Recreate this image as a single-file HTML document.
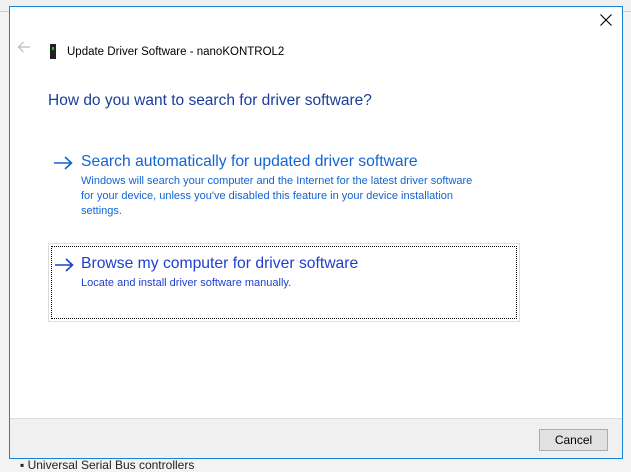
<!DOCTYPE html>
<html><head><meta charset="utf-8"><style>
*{margin:0;padding:0;box-sizing:border-box}
body{width:631px;height:465px;overflow:hidden;background:#f3f3f3;font-family:"Segoe UI","Liberation Sans",sans-serif;position:relative}
.topbar{position:absolute;left:0;top:0;width:631px;height:12px;background:#f0f0f0;border-bottom:1px solid #ccc}
.btm{position:absolute;left:20px;top:458px;font-size:12px;color:#222}
.dlg{position:absolute;left:9px;top:6px;width:614px;height:453px;background:#fff;border:1px solid #1883d7}
.title{position:absolute;left:67px;top:46px;font-size:11.5px;color:#000;white-space:nowrap}
.back{position:absolute;left:17px;top:41px}
.dev{position:absolute;left:50px;top:44px;width:6px;height:15px;background:#222}
.dev:after{content:"";position:absolute;left:2px;top:3px;width:2px;height:3px;background:#1c1}
.x{position:absolute;left:600px;top:14px}
h1{position:absolute;left:48px;top:92px;font-size:15.5px;font-weight:normal;color:#1a3d99;white-space:nowrap}
.opt{position:absolute;width:472px}
.opt .t{position:absolute;font-size:15.7px;white-space:nowrap}
.opt .a{position:absolute}
.opt .d{position:absolute;font-size:11px;line-height:15px;width:400px}
.o1{left:48px;top:152px;color:#1264d4}
.o2{top:243px;height:79px;border:1px solid #ddd;left:48px}
.o2 .in{position:absolute;left:2px;top:2px;right:2px;bottom:2px;border:1px dotted #000}
.o2,.o2 *{color:#1e3ed0}
.foot{position:absolute;left:10px;top:418px;width:612px;height:40px;background:#f0f0f0;border-top:1px solid #ddd}
.cancel{position:absolute;left:529px;top:10px;width:69px;height:22px;background:#e1e1e1;border:1px solid #adadad;font-size:12px;text-align:center;line-height:20px;color:#000}
</style></head><body>
<div class="topbar"></div>
<div class="btm">▪ Universal Serial Bus controllers</div>
<div class="dlg"></div>
<svg class="x" width="12" height="12" viewBox="0 0 12 12"><path d="M0.5 0.5L11.5 11.5M11.5 0.5L0.5 11.5" stroke="#000" stroke-width="1.1"/></svg>
<svg class="back" width="14" height="12" viewBox="0 0 14 12"><path d="M13 6H1.5M6.5 1L1.5 6L6.5 11" stroke="#bbb" stroke-width="1.2" fill="none"/></svg>
<div class="dev"></div>
<div class="title">Update Driver Software - nanoKONTROL2</div>
<h1>How do you want to search for driver software?</h1>
<div class="opt o1"><svg class="a" style="left:6px;top:4px" width="19" height="14" viewBox="0 0 19 14"><path d="M0 7H17.5M11 1L17.5 7L11 13" stroke="#1264d4" stroke-width="1.6" fill="none"/></svg><span class="t" style="left:33px;top:1px">Search automatically for updated driver software</span>
<div class="d" style="left:33px;top:22px">Windows will search your computer and the Internet for the latest driver software for your device, unless you've disabled this feature in your device installation settings.</div></div>
<div class="opt o2"><div class="in"></div><svg class="a" style="left:6px;top:14px" width="19" height="14" viewBox="0 0 19 14"><path d="M0 7H17.5M11 1L17.5 7L11 13" stroke="#1e3ed0" stroke-width="1.6" fill="none"/></svg><span class="t" style="top:11px;left:32px">Browse my computer for driver software</span>
<div class="d" style="top:32px;left:32px">Locate and install driver software manually.</div></div>
<div class="foot"><div class="cancel">Cancel</div></div>
</body></html>
